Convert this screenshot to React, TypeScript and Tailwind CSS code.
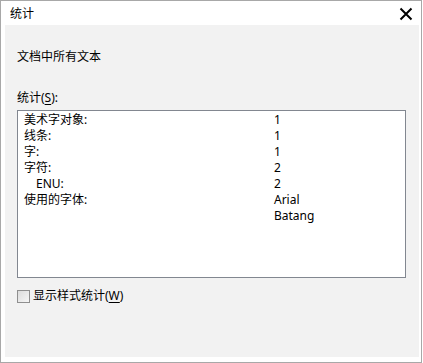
const rows: { label: string; value: string; indent?: boolean }[] = [
  { label: '美术字对象:', value: '1' },
  { label: '线条:', value: '1' },
  { label: '字:', value: '1' },
  { label: '字符:', value: '2' },
  { label: 'ENU:', value: '2', indent: true },
  { label: '使用的字体:', value: 'Arial' },
  { label: '', value: 'Batang' },
]

export default function App() {
  return (
    <div
      className="relative h-[363px] w-[423px] overflow-hidden bg-white text-[12px] leading-4 text-black"
      style={{ fontFamily: '"Noto Sans", "Noto Sans CJK SC", sans-serif' }}
    >
      <div className="flex h-[363px] w-[422px] flex-col border border-[#a8a8a8]">
        {/* title bar */}
        <div className="flex h-[24px] items-center justify-between pl-[9px] pr-[8px]">
          <span className="mt-[1px]">统计</span>
          <svg width="14" height="14" viewBox="0 0 14 14" className="mt-[1px]">
            <path d="M1.5 1.5 L12.5 12.5 M12.5 1.5 L1.5 12.5" stroke="#000" strokeWidth="2" />
          </svg>
        </div>

        {/* body */}
        <div className="ml-[4px] mr-[2px] flex h-[332px] flex-col bg-[#f2f2f2] pl-[12px] pt-[24px]">
          <p>文档中所有文本</p>
          <p className="mt-[25px]">
            统计(<span className="underline underline-offset-2">S</span>):
          </p>
          <div className="mt-[4px] h-[168px] w-[389px] border border-[#828790] bg-white pl-[6px] pt-[1px]">
            {rows.map((r, i) => (
              <div key={i} className="flex h-4 items-center">
                <span className={r.indent ? 'w-[250px] pl-[12px]' : 'w-[250px]'}>{r.label}</span>
                <span>{r.value}</span>
              </div>
            ))}
          </div>
          <label className="mt-[10px] flex items-center gap-[3px]">
            <span className="h-[13px] w-[13px] border border-[#8f8f8f] bg-gradient-to-br from-[#dcdcdc] to-[#f6f6f6]" />
            <span>
              显示样式统计(<span className="underline underline-offset-2">W</span>)
            </span>
          </label>
        </div>
      </div>
    </div>
  )
}
